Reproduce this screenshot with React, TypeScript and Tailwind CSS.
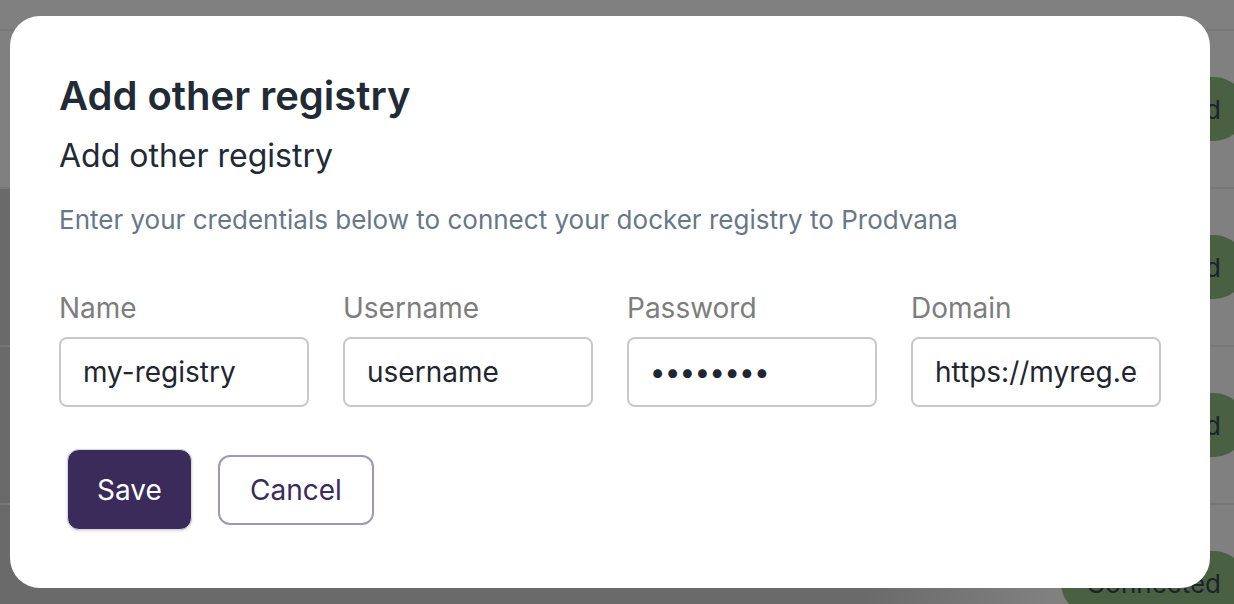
import React from "react";

const font = { fontFamily: "Inter, 'Noto Sans', sans-serif" };

function BgRow({ first, badge }: { first?: boolean; badge?: boolean }) {
  return (
    <div
      className={
        "h-[158px] border-t-2 border-[#777777] flex items-center justify-end " +
        (first ? "bg-[#808080]" : "bg-[linear-gradient(90deg,#6a6a6a_0%,#6a6a6a_70%,#808080_85%)]")
      }
    >
      {badge && (
        <div className="mr-[-12px] h-[64px] rounded-full bg-[#4a6043] pl-[25px] pr-[25px] flex items-center text-[26px] text-[#1c222b]">
          Connected
        </div>
      )}
    </div>
  );
}

function Field({ label, value, secret }: { label: string; value: string; secret?: boolean }) {
  return (
    <div className="flex flex-col w-[250px]">
      <label className="text-[28px] leading-[34px] text-[#7d7d7d] mb-[12px]">{label}</label>
      <input
        readOnly
        value={value}
        className={
          "h-[70px] w-full rounded-[8px] border-2 border-[#c9c9c9] pl-[22px] pr-[21px] text-[28px] text-[#1f2630] bg-white outline-none " +
          (secret ? "tracking-[1.6px] font-bold" : "")
        }
        style={font}
      />
    </div>
  );
}

export default function App() {
  return (
    <div className="relative w-[1234px] h-[604px] overflow-hidden bg-[#808080]" style={font}>
      <div className="pt-[29px]">
        <BgRow first badge />
        <BgRow badge />
        <BgRow badge />
        <BgRow badge />
      </div>

      <div className="absolute left-[10px] top-[16px] w-[1200px] h-[572px] rounded-[30px] bg-white pl-[49px] pt-[56px]">
        <h1 className="text-[40px] leading-[48px] font-semibold text-[#222a36]">Add other registry</h1>
        <h2 className="mt-[16px] text-[32px] leading-[40px] text-[#222a36]">Add other registry</h2>
        <p className="mt-[28px] text-[26px] leading-[32px] text-[#687788]">
          Enter your credentials below to connect your docker registry to Prodvana
        </p>
        <div className="mt-[55px] flex gap-[34px]">
          <Field label="Name" value="my-registry" />
          <Field label="Username" value="username" />
          <Field label="Password" value="••••••••" secret />
          <Field label="Domain" value="https://myreg.example.com" />
        </div>
        <div className="mt-[42px] ml-[8px] flex items-center gap-[26px]">
          <button className="w-[125px] h-[81px] rounded-[12px] bg-[#3a2b5b] border border-[#d9d9de] shadow-[0_1px_3px_rgba(0,0,0,0.15)] text-white text-[28px]">
            Save
          </button>
          <button className="w-[156px] h-[70px] rounded-[12px] border-2 border-[#a197b5] bg-white text-[#3a2b5b] text-[28px]">
            Cancel
          </button>
        </div>
      </div>
    </div>
  );
}
